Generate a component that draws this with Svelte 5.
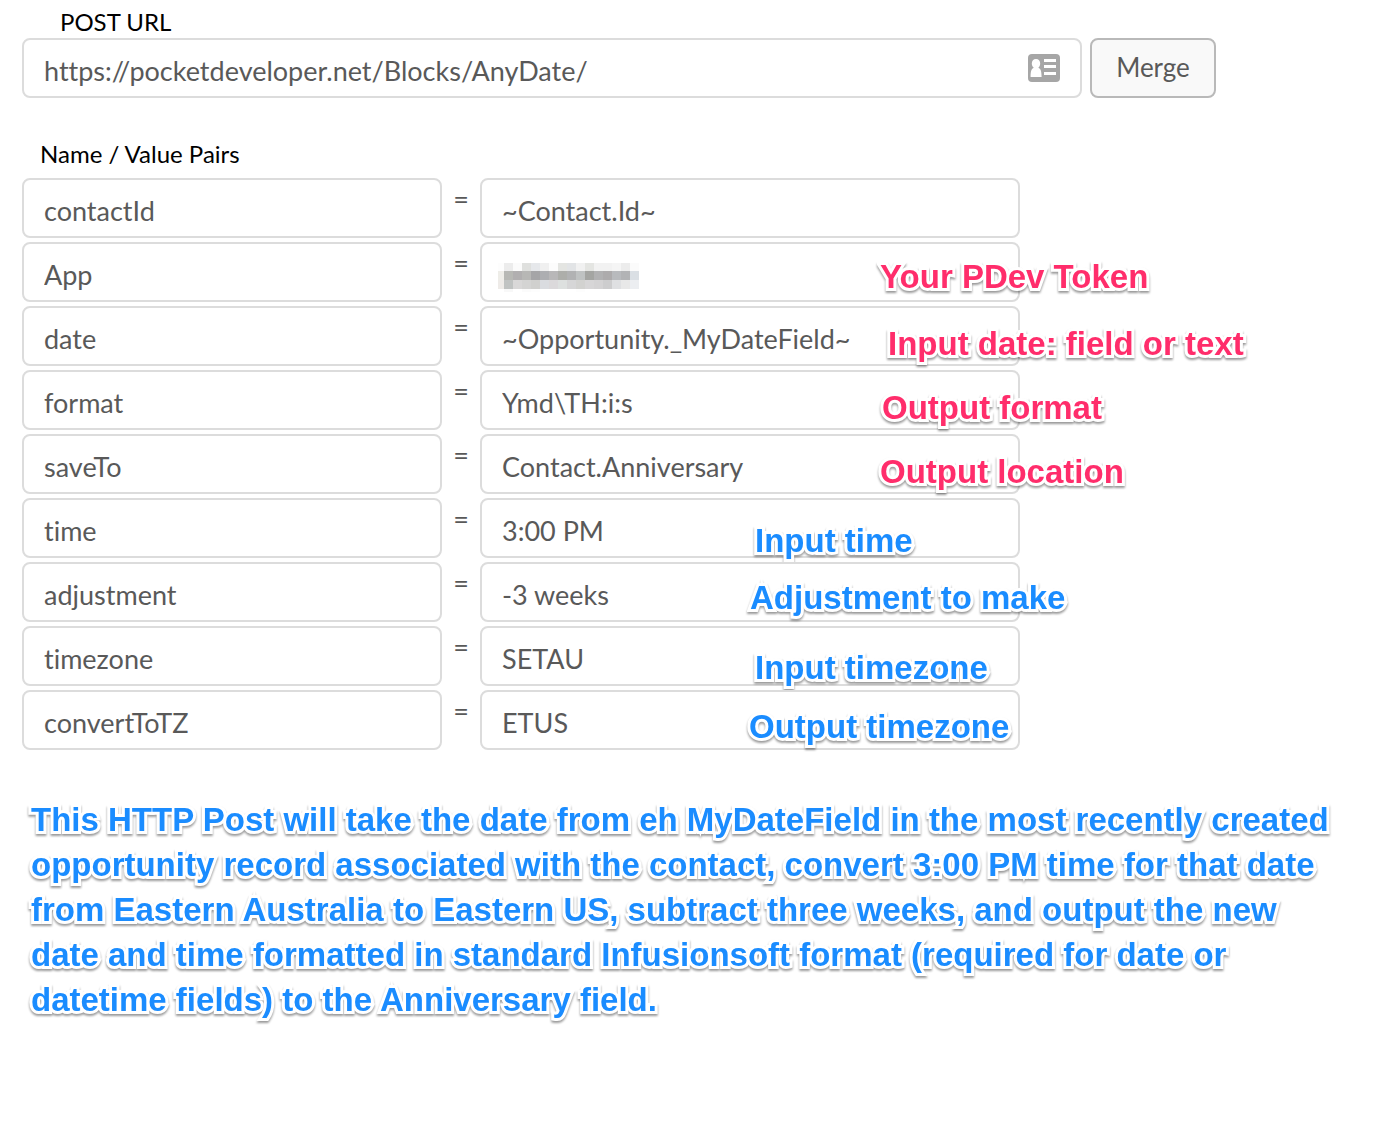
<script>
  let url = $state('https://pocketdeveloper.net/Blocks/AnyDate/');

  // note.x / note.y place each annotation on top of its value cell
  let pairs = $state([
    { name: 'contactId', value: '~Contact.Id~' },
    { name: 'App', value: '', redacted: true, note: { text: 'Your PDev Token', tone: 'pink', x: 400, y: 15 } },
    { name: 'date', value: '~Opportunity._MyDateField~', note: { text: 'Input date: field or text', tone: 'pink', x: 408, y: 18 } },
    { name: 'format', value: 'Ymd\\TH:i:s', note: { text: 'Output format', tone: 'pink', x: 402, y: 18 } },
    { name: 'saveTo', value: 'Contact.Anniversary', note: { text: 'Output location', tone: 'pink', x: 400, y: 18 } },
    { name: 'time', value: '3:00 PM', note: { text: 'Input time', tone: 'blue', x: 275, y: 23 } },
    { name: 'adjustment', value: '-3 weeks', note: { text: 'Adjustment to make', tone: 'blue', x: 270, y: 16 } },
    { name: 'timezone', value: 'SETAU', note: { text: 'Input timezone', tone: 'blue', x: 275, y: 22 } },
    { name: 'convertToTZ', value: 'ETUS', note: { text: 'Output timezone', tone: 'blue', x: 269, y: 17 } }
  ]);

  const summary = [
    'This HTTP Post will take the date from eh MyDateField in the most recently created',
    'opportunity record associated with the contact, convert 3:00 PM time for that date',
    'from Eastern Australia to Eastern US, subtract three weeks, and output the new',
    'date and time formatted in standard Infusionsoft format (required for date or',
    'datetime fields) to the Anniversary field.'
  ];

  const mosaic = [
    ['#fdfdfd', '#ececec', '#fbfbfb', '#dfe0de', '#e6e8eb', '#f0f0f0', '#fcfcfc', '#e4e5e2', '#e2e4e6', '#f1f1f1', '#e4e5e2', '#f2f2f2', '#f2f2f2', '#f5f5f5', '#ececec', '#fbfbfb'],
    ['#eeede8', '#b7b8b4', '#b1afb0', '#b7b7b5', '#a5a5a7', '#adaeb1', '#b8b7b8', '#adaeaa', '#b1b2b3', '#bfc2c2', '#a4a5a2', '#b1b1b2', '#adabac', '#b8babd', '#b2b3b5', '#dadfe4'],
    ['#eeebe8', '#c0c3c2', '#d9d8d8', '#d4d4d3', '#d0d0ce', '#dadce0', '#dbd9db', '#dde0df', '#d6d6d7', '#d2d2d0', '#d7d6d7', '#d4d3d4', '#cdcdce', '#dfe0e2', '#e8e8e8', '#eceef1'],
    ['#ffffff', '#f8f8f8', '#ffffff', '#fbfbfb', '#fdfdfd', '#ffffff', '#ffffff', '#ffffff', '#ffffff', '#fdfdfd', '#ffffff', '#ffffff', '#ffffff', '#ffffff', '#ffffff', '#ffffff']
  ];
  const rowTop = [0, 8, 17, 26];
  const rowHeight = [8, 9, 9, 3];
</script>

<main>
  <section class="post">
    <label class="post-label" for="post-url">POST URL</label>
    <div class="post-row">
      <div class="url">
        <input id="post-url" type="text" bind:value={url} />
        <svg class="card" viewBox="0 0 32 28" aria-hidden="true">
          <rect width="32" height="28" rx="4" fill="#a6a6a6" />
          <path
            d="M8 5c2.600 0 4.200 1.900 4.200 4.500 0 1.900-.8 3.300-1.900 4.200 2.400 1 3.300 3.200 3.300 9.300H2.600c0-6.100.9-8.300 3.200-9.300C4.600 12.800 3.800 11.400 3.800 9.500 3.800 6.900 5.400 5 8 5z"
            fill="#fff"
          />
          <path d="M16 5h12v3H16zM16 11h12v3H16zM16 18h12v3H16z" fill="#fff" />
        </svg>
      </div>
      <button type="button">Merge</button>
    </div>
  </section>

  <section class="pairs">
    <h2>Name / Value Pairs</h2>
    {#each pairs as pair, i}
      <div class="pair">
        <input class="name" type="text" aria-label={`Name ${i + 1}`} bind:value={pair.name} />
        <span class="equals">=</span>
        <div class="value">
          <input type="text" aria-label={`Value for ${pair.name}`} bind:value={pair.value} />
          {#if pair.redacted}
            <svg class="mosaic" viewBox="0 0 141 29" shape-rendering="crispEdges" aria-hidden="true">
              {#each mosaic as tiles, r}
                {#each tiles as fill, c}
                  <rect x={c === 0 ? 0 : c * 9 - 3} y={rowTop[r]} width={c === 0 ? 6 : 9} height={rowHeight[r]} {fill} />
                {/each}
              {/each}
            </svg>
          {/if}
          {#if pair.note}
            <span class="note {pair.note.tone}" style:left="{pair.note.x}px" style:top="{pair.note.y}px">{pair.note.text}</span>
          {/if}
        </div>
      </div>
    {/each}
  </section>

  <p class="summary blue">
    {#each summary as line}
      <span>{line}</span>
    {/each}
  </p>
</main>

<style>
  :global(body) {
    background: #fff;
  }

  main {
    padding: 6px 22px 40px;
    font-family: Lato, 'Liberation Sans', sans-serif;
    font-variant-ligatures: none;
    color: #595959;
  }

  .post {
    max-width: 1194px;
  }

  .post-label {
    display: block;
    padding: 0 38px;
    font-size: 24px;
    line-height: 32px;
    color: #000;
  }

  .post-row {
    display: flex;
    gap: 8px;
  }

  .url,
  .value {
    position: relative;
    min-width: 0;
  }

  .url {
    flex: 1;
  }

  input {
    display: block;
    box-sizing: border-box;
    width: 100%;
    height: 60px;
    margin: 0;
    padding: 4px 20px 0;
    border: 2px solid #dcdcdc;
    border-radius: 8px;
    outline: none;
    background: #fff;
    color: inherit;
    font: inherit;
    font-size: 27px;
    font-variant-ligatures: none;
  }

  .card {
    position: absolute;
    top: 16px;
    right: 22px;
    width: 32px;
    height: 28px;
  }

  button {
    box-sizing: border-box;
    width: 126px;
    height: 60px;
    padding: 0 0 2px;
    border: 2px solid #b9b9b9;
    border-radius: 8px;
    background: #f9f9f9;
    color: inherit;
    font: inherit;
    font-size: 26px;
  }

  .pairs {
    display: flex;
    flex-direction: column;
    gap: 4px;
    max-width: 998px;
    padding-top: 40px;
  }

  h2 {
    margin: 0;
    padding: 0 18px 4px;
    color: #000;
    font-size: 24px;
    font-weight: 400;
    line-height: 32px;
  }

  .pair {
    display: grid;
    grid-template-columns: 42fr 38px 54fr;
  }

  .equals {
    font-size: 27px;
    line-height: 42px;
    text-align: center;
  }

  .mosaic {
    position: absolute;
    top: 21px;
    left: 18px;
    width: 141px;
    height: 29px;
  }

  .note,
  .summary {
    font-family: 'Liberation Sans', Arial, sans-serif;
    font-size: 33px;
    font-weight: 700;
    -webkit-text-stroke: 6px #fff;
    paint-order: stroke fill;
    filter: drop-shadow(0 2px 1px rgba(0, 0, 0, 0.4));
  }

  .note {
    position: absolute;
    line-height: 40px;
    white-space: nowrap;
    pointer-events: none;
  }

  .pink {
    color: #ff2d6b;
  }

  .blue {
    color: #1a8cff;
  }

  .summary {
    margin: 0;
    padding: 47px 0 0 9px;
    line-height: 45px;
  }

  .summary span {
    display: block;
  }
</style>
